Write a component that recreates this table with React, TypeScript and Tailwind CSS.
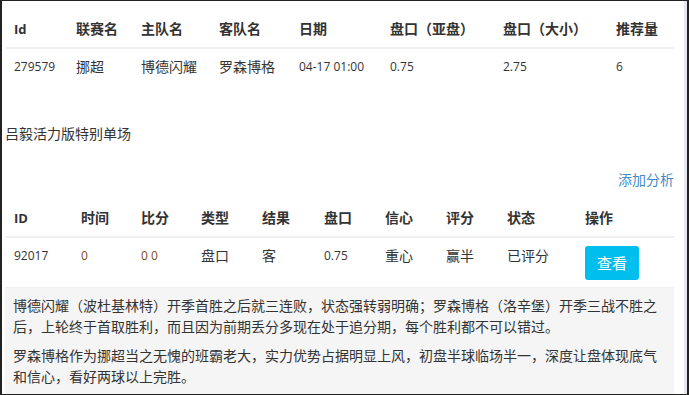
import React from "react";

const FONT = { fontFamily: '"Open Sans", "Noto Sans CJK SC", sans-serif' };

const t1Cols = "grid-cols-[62px_65px_78px_80px_91px_113px_113px_67px]";
const t2Cols = "grid-cols-[67px_60px_60px_61px_62px_61px_61px_61px_78px_98px]";

function Cell({ children, num }: { children: React.ReactNode; num?: boolean }) {
  return (
    <div className={`pl-[9px] py-2 leading-[20px] whitespace-nowrap ${num ? "text-[12px]" : "text-[14px]"}`}>
      {children}
    </div>
  );
}

function Head({ children, num }: { children: React.ReactNode; num?: boolean }) {
  return (
    <div className={`pl-[9px] py-2 leading-[20px] font-bold whitespace-nowrap ${num ? "text-[13px]" : "text-[14px]"}`}>
      {children}
    </div>
  );
}

export default function App() {
  return (
    <div
      className="w-[689px] h-[395px] overflow-hidden bg-white border-t border-b border-l-2 border-r-2 border-[#222] text-[#333] box-border"
      style={FONT}
    >
      <div className="flex h-full">
        <div className="flex-1 pl-[3px]">
          <div className="w-[669px] mt-[10px]">
            <div className={`grid ${t1Cols} border-b-2 border-[#f0f0f0]`}>
              <Head num>Id</Head>
              <Head>联赛名</Head>
              <Head>主队名</Head>
              <Head>客队名</Head>
              <Head>日期</Head>
              <Head>盘口（亚盘）</Head>
              <Head>盘口（大小）</Head>
              <Head>推荐量</Head>
            </div>
            <div className={`grid ${t1Cols}`}>
              <Cell num>279579</Cell>
              <Cell>挪超</Cell>
              <Cell>博德闪耀</Cell>
              <Cell>罗森博格</Cell>
              <Cell num>04-17 01:00</Cell>
              <Cell num>0.75</Cell>
              <Cell num>2.75</Cell>
              <Cell num>6</Cell>
            </div>

            <div className="mt-[39px] text-[14px] leading-[20px]">吕毅活力版特别单场</div>
            <div className="mt-[26px] text-[14px] leading-[20px] text-right text-[#428bca]">添加分析</div>

            <div className={`mt-[10px] grid ${t2Cols} border-b-2 border-[#f0f0f0]`}>
              <Head num>ID</Head>
              <Head>时间</Head>
              <Head>比分</Head>
              <Head>类型</Head>
              <Head>结果</Head>
              <Head>盘口</Head>
              <Head>信心</Head>
              <Head>评分</Head>
              <Head>状态</Head>
              <Head>操作</Head>
            </div>
            <div className={`grid ${t2Cols} border-b border-[#eeeeee] h-[50px]`}>
              <Cell num>92017</Cell>
              <Cell num><span className="text-[#7a4a1e]">0</span></Cell>
              <Cell num><span className="text-[#7a4a1e]">0 0</span></Cell>
              <Cell>盘口</Cell>
              <Cell>客</Cell>
              <Cell num>0.75</Cell>
              <Cell>重心</Cell>
              <Cell>赢半</Cell>
              <Cell>已评分</Cell>
              <div className="pl-[9px] pt-2">
                <button className="w-[54px] h-[34px] rounded-[3px] bg-[#00bfef] text-white text-[15px] leading-[20px]">
                  查看
                </button>
              </div>
            </div>

            <div className="bg-[#f5f5f5] pl-[8px] pr-[8px] pt-[7px] pb-4 text-[14px] leading-[21px]">
              <p>
                博德闪耀（波杜基林特）开季首胜之后就三连败，状态强转弱明确；罗森博格（洛辛堡）开季三战不胜之后，上轮终于首取胜利，而且因为前期丢分多现在处于追分期，每个胜利都不可以错过。
              </p>
              <p className="mt-[8px]">
                罗森博格作为挪超当之无愧的班霸老大，实力优势占据明显上风，初盘半球临场半一，深度让盘体现底气和信心，看好两球以上完胜。
              </p>
            </div>
          </div>
        </div>
        <div className="w-[3px] bg-[#e6e6ef]"></div>
      </div>
    </div>
  );
}
